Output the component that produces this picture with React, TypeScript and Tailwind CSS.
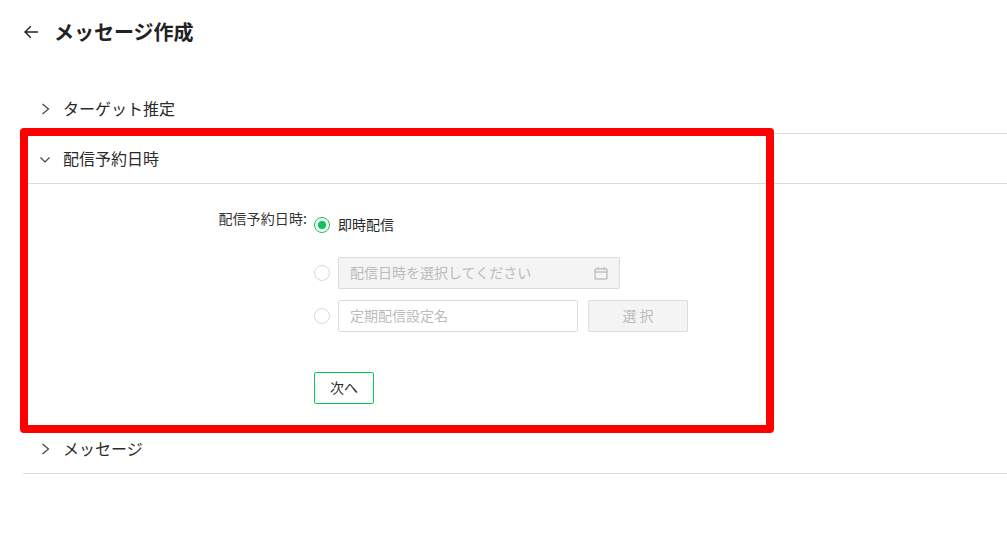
import React from "react";

const Chevron = ({ down }: { down?: boolean }) => (
  <svg width="12" height="12" viewBox="0 0 12 12" fill="none" stroke="#444" strokeWidth="1.2" className={`shrink-0 ${down ? "mt-[2px]" : ""}`}>
    {down ? <path d="M1.5 3.5 L6 8 L10.5 3.5" /> : <path d="M3.5 1 L9.5 6 L3.5 11" />}
  </svg>
);

const Row = ({ title, down }: { title: string; down?: boolean }) => (
  <div className="h-[50px] flex items-center border-b border-[#dcdcdc] pl-4">
    <Chevron down={down} />
    <span className="ml-3 mb-[2px] text-base text-[#2a2a2a]">{title}</span>
  </div>
);

const Radio = ({ on }: { on?: boolean }) => (
  <span className={`w-4 h-4 rounded-full border flex items-center justify-center shrink-0 ${on ? "border-[#06c755]" : "border-[#d9d9d9]"}`}>
    {on && <span className="w-2 h-2 rounded-full bg-[#06c755]" />}
  </span>
);

export default function App() {
  return (
    <div className="relative w-[1007px] h-[548px] overflow-hidden bg-white text-[#222]" style={{ fontFamily: '"Noto Sans CJK JP", "Noto Sans", sans-serif' }}>
      <header className="h-[64px] flex items-center pl-6">
        <svg width="14" height="14" viewBox="0 0 14 14" fill="none" stroke="#222" strokeWidth="1.4">
          <path d="M14 7 H1 M6.8 1.2 L1 7 L6.8 12.8" />
        </svg>
        <h1 className="ml-4 text-xl font-bold leading-none text-[#222]">メッセージ作成</h1>
      </header>
      <div className="ml-[23px] mt-5">
        <Row title="ターゲット推定" />
        <Row title="配信予約日時" down />
        <div className="h-[240px] flex pt-[33px]">
          <div className="w-[285px] pr-[1px] text-right text-sm leading-[16px] text-[#333] -mt-[7px] tracking-[0.1px]">配信予約日時:</div>
          <div className="ml-[6px] flex flex-col">
            <div className="flex items-center h-4">
              <Radio on />
              <span className="ml-2 mb-[2px] text-sm text-[#2a2a2a]">即時配信</span>
            </div>
            <div className="flex items-center mt-6">
              <Radio />
              <div className="ml-2 w-[282px] h-8 flex items-center justify-between pl-[11px] pr-[11px] pb-[2px] rounded-[2px] border border-[#dcdcdc] bg-[#f4f4f4] text-sm text-[#bbbbbb]">
                <span>配信日時を選択してください</span>
                <svg width="14" height="14" viewBox="0 0 14 14" fill="none" stroke="#aaa" strokeWidth="1" className="mt-[2px]">
                  <path d="M1 3 H13 V13 H1 Z M1 6 H13 M4 1 V3 M10 1 V3" />
                </svg>
              </div>
            </div>
            <div className="flex items-center mt-[11px]">
              <Radio />
              <div className="ml-2 w-[240px] h-8 flex items-center pl-[11px] pb-[2px] rounded-[2px] border border-[#dcdcdc] bg-white text-sm text-[#bbbbbb]">定期配信設定名</div>
              <button className="ml-[10px] w-[100px] h-8 pb-[2px] rounded-[2px] border border-[#dcdcdc] bg-[#f4f4f4] text-sm text-[#bbbbbb]">選 択</button>
            </div>
            <button className="mt-10 w-[60px] h-8 pb-[2px] rounded-[2px] border border-[#06c755] bg-white text-sm text-[#2a2a2a]">次へ</button>
          </div>
        </div>
        <Row title="メッセージ" />
      </div>
      <div className="absolute left-[20px] top-[128px] w-[754px] h-[305px] border-8 border-[#ff0000] rounded-[4px] pointer-events-none" />
    </div>
  );
}
